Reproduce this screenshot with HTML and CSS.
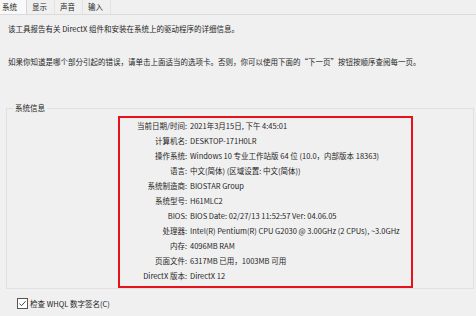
FILE: index.html
```html
<!DOCTYPE html>
<html lang="zh-CN">
<head>
<meta charset="utf-8">
<link rel="stylesheet" href="styles.css">
</head>
<body>
<div class="tabs">
  <div class="tab active">系统</div>
  <div class="tab">显示</div>
  <div class="tab">声音</div>
  <div class="tab">输入</div>
</div>
<p class="desc first">该工具报告有关 DirectX 组件和安装在系统上的驱动程序的详细信息。</p>
<p class="desc second">如果你知道是哪个部分引起的错误，请单击上面适当的选项卡。否则，你可以使用下面的“下一页”按钮按顺序查阅每一页。</p>
<fieldset class="group">
  <legend>系统信息</legend>
  <div class="info">
    <div class="k">当前日期/时间:</div><div class="v">2021年3月15日, 下午 4:45:01</div>
    <div class="k">计算机名:</div><div class="v">DESKTOP-171H0LR</div>
    <div class="k">操作系统:</div><div class="v">Windows 10 专业工作站版 64 位 (10.0，内部版本 18363)</div>
    <div class="k">语言:</div><div class="v">中文(简体) (区域设置: 中文(简体))</div>
    <div class="k">系统制造商:</div><div class="v">BIOSTAR Group</div>
    <div class="k">系统型号:</div><div class="v">H61MLC2</div>
    <div class="k">BIOS:</div><div class="v">BIOS Date: 02/27/13 11:52:57 Ver: 04.06.05</div>
    <div class="k">处理器:</div><div class="v">Intel(R) Pentium(R) CPU G2030 @ 3.00GHz (2 CPUs), ~3.0GHz</div>
    <div class="k">内存:</div><div class="v">4096MB RAM</div>
    <div class="k">页面文件:</div><div class="v">6317MB 已用，1003MB 可用</div>
    <div class="k">DirectX 版本:</div><div class="v">DirectX 12</div>
  </div>
</fieldset>
<label class="check">
  <span class="box"><svg width="9" height="9" viewBox="0 0 9 9"><path d="M1.5 4.6 L3.6 6.7 L7.6 2.2" fill="none" stroke="#333" stroke-width="0.9"/></svg></span>
  <span>检查 WHQL 数字签名(C)</span>
</label>
</body>
</html>
```
FILE: styles.css
```css
html, body {
  margin: 0;
  padding: 0;
}
body {
  width: 476px;
  height: 316px;
  overflow: hidden;
  background: #f0f0f0;
  color: #1e1e1e;
  font-family: "Noto Sans CJK SC", "Noto Sans", sans-serif;
  font-size: 7.5px;
  line-height: 10px;
}
.tabs {
  display: flex;
  height: 14px;
  border-bottom: 1px solid #dadada;
  background: #f0f0f0;
}
.tab {
  width: 27px;
  padding-left: 4px;
  box-sizing: border-box;
  line-height: 14px;
  border-right: 1px solid #e2e2e2;
  margin-left: 1px;
}
.tab:first-child {
  margin-left: 0;
  padding-left: 2px;
}
.tab.active {
  background: #f9f9f9;
  border-right: 1px solid #d6d6d6;
}
.desc {
  margin: 0;
  padding-left: 8px;
  white-space: nowrap;
}
.desc.first {
  margin-top: 9px;
}
.desc.second {
  margin-top: 23px;
}
.group {
  margin: 36px 2px 0 6px;
  padding: 0 0 3px 0;
  border: 1px solid #e0e0e0;
  height: 186px;
  box-sizing: border-box;
}
.group legend {
  margin-left: 6px;
  padding: 0 2px;
  line-height: 10px;
}
.info {
  margin: 3px 0 0 111px;
  width: 295px;
  height: 172px;
  box-sizing: border-box;
  border: 2px solid #e5121b;
  display: grid;
  grid-template-columns: 67px 1fr;
  column-gap: 3px;
  grid-auto-rows: 15.1px;
  align-items: center;
  white-space: nowrap;
}
.k {
  text-align: right;
}
.check {
  display: flex;
  align-items: center;
  gap: 2px;
  margin: 9px 0 0 17px;
  line-height: 10px;
}
.box {
  width: 9px;
  height: 9px;
  border: 1px solid #555;
  background: #fff;
  display: flex;
}
```
